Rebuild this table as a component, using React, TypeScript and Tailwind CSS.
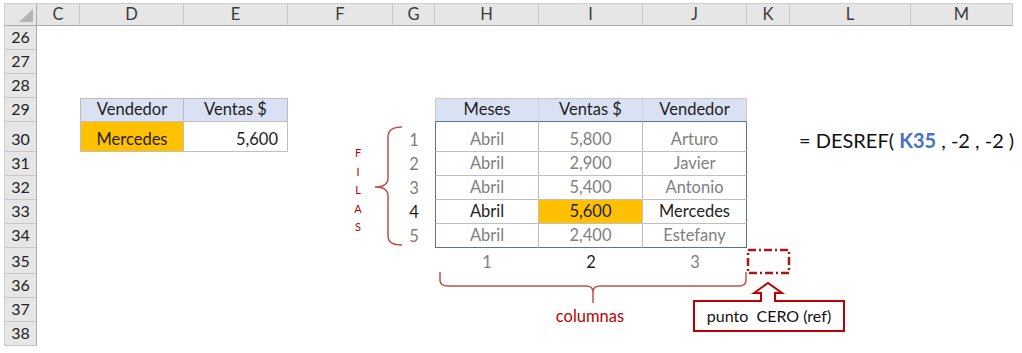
import React from "react";

type Cell = { text?: React.ReactNode; cls?: string };

const COLS = ["C", "D", "E", "F", "G", "H", "I", "J", "K", "L", "M"];
const ROWS = [26, 27, 28, 29, 30, 31, 32, 33, 34, 35, 36, 37, 38];

const GRAY = "text-[#808080]";
const DARK = "text-[#1e1e1e]";

const t1Head = "bg-[#d9e1f2] border-t border-b border-r border-[#bfbfbf] justify-center " + DARK;
const t2Head = "bg-[#d9e1f2] border-t border-t-[#c9c9c9] border-r border-r-[#c9d3e6] border-b border-b-[#5a7393] justify-center " + DARK;

const body = (col: string, row: number, text: string, hi: boolean, orange = false): Cell => {
  const parts: string[] = ["justify-center"];
  parts.push(hi ? DARK : GRAY);
  if (orange) parts.push("bg-[#ffc000]");
  if (col === "H") parts.push("border-l border-l-[#5a7393]");
  if (col === "J") parts.push("border-r border-r-[#5a7393]");
  else parts.push("border-r border-r-[#bfbfbf]");
  if (row === 34) parts.push("border-b border-b-[#5a7393]");
  else parts.push("border-b border-b-[#bfbfbf]");
  return { text, cls: parts.join(" ") };
};

const tableRows: [string, string, string][] = [
  ["Abril", "5,800", "Arturo"],
  ["Abril", "2,900", "Javier"],
  ["Abril", "5,400", "Antonio"],
  ["Abril", "5,600", "Mercedes"],
  ["Abril", "2,400", "Estefany"],
];

const cells: Record<string, Cell> = {
  D29: { text: "Vendedor", cls: t1Head + " border-l" },
  E29: { text: "Ventas $", cls: t1Head },
  D30: { text: "Mercedes", cls: "bg-[#ffc000] border-l border-r border-b border-[#bfbfbf] justify-center " + DARK },
  E30: { text: "5,600", cls: "border-r border-b border-[#bfbfbf] justify-end pr-[9px] " + DARK },
  H29: { text: "Meses", cls: t2Head + " border-l border-l-[#c9c9c9]" },
  I29: { text: "Ventas $", cls: t2Head },
  J29: { text: "Vendedor", cls: "bg-[#d9e1f2] border-t border-t-[#c9c9c9] border-r border-r-[#c9c9c9] border-b border-b-[#5a7393] justify-center " + DARK },
  H35: { text: "1", cls: "justify-center " + GRAY },
  I35: { text: "2", cls: "justify-center " + DARK },
  J35: { text: "3", cls: "justify-center " + GRAY },
  L30: {
    text: (
      <span className="text-[20px] text-[#111]">
        = DESREF( <span className="font-bold text-[#4472c4]">K35</span> , -2 , -2 )
      </span>
    ),
    cls: "justify-start pl-[9px] overflow-visible",
  },
};

tableRows.forEach((r, i) => {
  const row = 30 + i;
  const hi = i === 3;
  cells["G" + row] = { text: String(i + 1), cls: "justify-center " + (hi ? DARK : GRAY) };
  cells["H" + row] = body("H", row, r[0], hi);
  cells["I" + row] = body("I", row, r[1], hi, hi);
  cells["J" + row] = body("J", row, r[2], hi);
});

export default function App() {
  return (
    <div
      className="relative w-[1022px] h-[353px] bg-white overflow-hidden"
      style={{ fontFamily: "Lato, 'Open Sans', sans-serif" }}
    >
      <div className="ml-[4px] mt-[3px] grid grid-cols-[33px_43px_104px_104px_105px_42px_104px_104px_104px_43px_121px_102px] grid-rows-[23px_24px_24px_24px_24px_30px_24px_24px_24px_24px_26px_24px_24px_24px] text-[16.5px]">
        {/* corner */}
        <div className="relative bg-[#e6e6e6] border-t border-l border-t-[#cfcfcf] border-l-[#cfcfcf] border-r border-b border-r-[#ababab] border-b-[#ababab]">
          <svg className="absolute right-[3px] bottom-[3px]" width="14" height="13" viewBox="0 0 14 13">
            <polygon points="0,13 14,13 14,0" fill="#b4b4b4" />
          </svg>
        </div>
        {COLS.map((c) => (
          <div
            key={c}
            className="flex items-center justify-center bg-[#e6e6e6] border-t border-t-[#cfcfcf] border-r border-r-[#c8c8c8] border-b border-b-[#ababab] text-[#3c3c3c] text-[16.5px] leading-none"
          >
            {c}
          </div>
        ))}
        {ROWS.map((r) => (
          <React.Fragment key={r}>
            <div className="flex items-end justify-center leading-[24px] text-[16px] bg-[#e6e6e6] border-l border-l-[#cfcfcf] border-r border-r-[#ababab] border-b border-b-[#c8c8c8] text-[#222]">
              {r}
            </div>
            {COLS.map((c) => {
              const cell = cells[c + r];
              return (
                <div
                  key={c}
                  className={
                    "flex items-end leading-[24px] whitespace-nowrap " + (cell?.cls ?? "")
                  }
                >
                  {cell?.text}
                </div>
              );
            })}
          </React.Fragment>
        ))}
      </div>

      {/* FILAS annotation */}
      <div className="absolute left-[352px] top-[144px] w-[12px] flex flex-col items-center text-[11px] leading-[18.5px] text-[#c00000]">
        <span>F</span>
        <span>I</span>
        <span>L</span>
        <span>A</span>
        <span>S</span>
      </div>

      {/* columnas */}
      <div className="absolute left-[540px] top-[306px] w-[100px] text-center text-[16.5px] leading-[20px] text-[#c00000]">
        columnas
      </div>

      {/* callout box */}
      <div className="absolute left-[693px] top-[300px] w-[152px] h-[32px] border-2 border-[#c00000] bg-white flex items-center justify-center text-[16px] text-[#111] whitespace-pre">
        {"punto  CERO (ref)"}
      </div>

      <svg className="absolute left-0 top-0 pointer-events-none" width="1022" height="353" viewBox="0 0 1022 353">
        {/* left brace */}
        <path
          d="M402,127 Q388,127 388,137 L388,178 Q388,187 375,187 Q388,187 388,196 L388,236 Q388,245 402,245"
          fill="none"
          stroke="#c0504d"
          strokeWidth="1.5"
        />
        {/* bottom brace */}
        <path
          d="M440,272 L440,280 Q440,286 448,286 L586,286 Q593,286 593,292 L593,303 M593,292 Q593,286 600,286 L739,286 Q746,286 746,280 L746,272"
          fill="none"
          stroke="#c0504d"
          strokeWidth="1.5"
        />
        {/* dotted reference box */}
        <rect
          x="748"
          y="250"
          width="41"
          height="23"
          fill="none"
          stroke="#a01818"
          strokeWidth="2.5"
          strokeDasharray="8 3 2 3"
        />
        {/* arrow */}
        <polyline
          points="761,302 761,293 754,293 768,283 782,293 775,293 775,302"
          fill="#ffffff"
          stroke="#c00000"
          strokeWidth="2"
          strokeLinejoin="miter"
        />
      </svg>
    </div>
  );
}
